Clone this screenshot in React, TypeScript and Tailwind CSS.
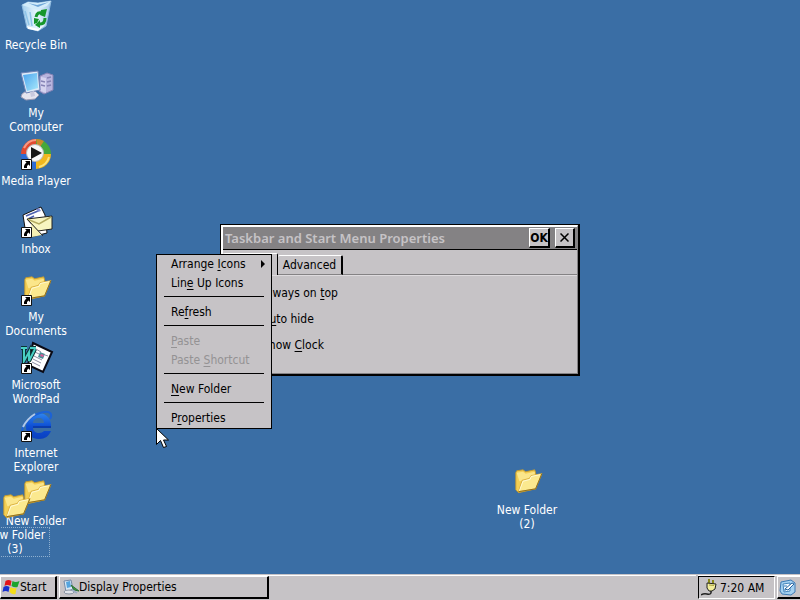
import type { ReactNode } from "react";

function Shortcut() {
  return (
    <g>
      <path d="M1.500 21.500h10v10h-10z" fill="#fff" stroke="#111" />
      <path d="M5 23h5v5l-1.500-1.500L7 28v2H4v-2l1-2 1.500-1.500z" fill="#000" />
    </g>
  );
}

function FolderShape() {
  return (
    <g transform="translate(3 0) scale(.9 .95)">
      <path d="M2 6l1-2 7-1 3 2 10-2 1 3v17l-19 4-3-3z" fill="#f3cf55" stroke="#c49a2c" strokeWidth="1" />
      <path d="M3 6l7-1 3 2 10-2v8L6 15z" fill="#fbe68a" />
      <path d="M5 26l4-12 8-2 2-3 12-2-7 16z" fill="#fbe98f" stroke="#d9ae3c" strokeWidth="1" />
      <path d="M6 25l4-10 8-2 1-3 10-2" fill="none" stroke="#fffbd8" strokeWidth="1" />
      <path d="M5 26l19-3 7-16" fill="none" stroke="#8a6a1c" strokeWidth="1" />
    </g>
  );
}

function Pic({ children }: { children: ReactNode }) {
  return (
    <svg width="32" height="32" viewBox="0 0 32 32" className="shrink-0 overflow-visible" aria-hidden="true">
      {children}
    </svg>
  );
}

function FolderIcon() {
  return (
    <Pic>
      <FolderShape />
    </Pic>
  );
}

function DocumentsIcon() {
  return (
    <Pic>
      <FolderShape />
      <Shortcut />
    </Pic>
  );
}

function RecycleIcon() {
  return (
    <Pic>
      <defs>
        <linearGradient id="bin" x1="0" x2="1">
          <stop offset="0" stopColor="#a5d0ee" />
          <stop offset=".5" stopColor="#e6f5fd" />
          <stop offset="1" stopColor="#a3c8ea" />
        </linearGradient>
      </defs>
      <path d="M2 3L8 0l10 1 13-2-5 25-8 5-11-3z" fill="url(#bin)" stroke="#8fbbe0" strokeWidth="1" />
      <path d="M2 3l6-3 10 1 13-2-4 5-10 4z" fill="#d3ecfa" />
      <path d="M8 1l9 2 12-3-11 5z" fill="#6fa6d8" />
      <path d="M7 24l11 3 7-5-7 7-10-2z" fill="#fff" />
      <path d="M5 9l4 14M10 10l2 14" stroke="#8fc4e8" strokeWidth="1.500" />
      <path d="M16 15c1-4 3-5 6-4" fill="none" stroke="#16962b" strokeWidth="3" />
      <path d="M21 8l6-1-2 8-5-2z" fill="#16962b" />
      <path d="M25 16c0 4-2 6-5 6" fill="none" stroke="#16962b" strokeWidth="3" />
      <path d="M20 18v8l-5-3z" fill="#16962b" />
      <path d="M14 16l5 1-2 4-3 1z" fill="#16962b" />
    </Pic>
  );
}

function ComputerIcon() {
  return (
    <Pic>
      <defs>
        <linearGradient id="screen" x1="0" y1="0" x2="1" y2="1">
          <stop offset="0" stopColor="#4aa4ee" />
          <stop offset="1" stopColor="#a7e8fb" />
        </linearGradient>
      </defs>
      <path d="M20 6l7-3 6 2v15l-9 4-5-3z" fill="#b7b4dd" stroke="#8583b5" strokeWidth="1" />
      <path d="M21 7l5 1v15l-5-2z" fill="#d5d3ef" />
      <path d="M27 8l4-1M27 12l4-1M27 16l4-1M21 11l4 1M21 15l4 1" stroke="#8583b5" strokeWidth="1.500" />
      <path d="M6 21h9l4 4-4 4-9 1-5-3 1-3z" fill="#e5e4ee" stroke="#9b9bb5" strokeWidth="1" />
      <path d="M1 3l17-2 2 19-14 3z" fill="#dceaf8" stroke="#6e83b6" strokeWidth="1" />
      <path d="M3 5l14-2 1 15-11 3z" fill="url(#screen)" />
      <path d="M10 22l4-1 1 5-4 1z" fill="#c9c9dd" />
    </Pic>
  );
}

function MediaIcon() {
  return (
    <Pic>
      <path d="M16 16V1a15 15 0 0 0-15 15z" fill="#e2492f" />
      <path d="M16 16V1a15 15 0 0 1 15 15z" fill="#48a83b" />
      <path d="M16 16h15a15 15 0 0 1-15 15z" fill="#f1b71d" />
      <path d="M16 16v15A15 15 0 0 1 1 16z" fill="#2f6bd3" />
      <path d="M16 1a15 15 0 0 1 8 2l-6 9z" fill="#c98a2c" />
      <path d="M4 10a14 14 0 0 1 12-8" fill="none" stroke="#f59a84" strokeWidth="2" />
      <path d="M29 19a14 14 0 0 1-10 10" fill="none" stroke="#fbe27a" strokeWidth="2" />
      <circle cx="15" cy="15" r="8.500" fill="#f8f8f8" stroke="#b9b9b9" />
      <path d="M11 9l11 6-11 6z" fill="#161616" />
      <Shortcut />
    </Pic>
  );
}

function InboxIcon() {
  return (
    <Pic>
      <path d="M3 9L21 1l4 8 2 18-16 4-6-9z" fill="#fff" stroke="#111" />
      <path d="M6 10l12-5M8 13l6-3" stroke="#4a5fae" strokeWidth="1.500" />
      <path d="M16 3l3-1 2 3-3 1z" fill="#7d8bd0" />
      <path d="M7 13l25-3v13l-14 2z" fill="#f8f5c0" stroke="#222" />
      <path d="M7 13l12 5 12-7" fill="none" stroke="#b3aa60" strokeWidth="1.500" />
      <path d="M11 17l11 12-10 2z" fill="#f5f1b4" />
      <path d="M7 13l16 17" stroke="#333" />
      <Shortcut />
    </Pic>
  );
}

function WordPadIcon() {
  return (
    <Pic>
      <path d="M13 1l19 9-9 20-15-7z" fill="#fff" stroke="#0a0a14" strokeWidth="2" />
      <path d="M16 7l5 3M15 10l4 2M14 14l8 4M13 17l8 4M12 20l8 4M25 13l3 1" stroke="#8d8da5" strokeWidth="1" />
      <path d="M20 10l5 2-2 5-5-2z" fill="#4a8b94" />
      <path d="M21 12l3 1-1 2-3-1z" fill="#d85c97" />
      <path d="M1 6h6M10 6h6M4 7v12l5-9v9l6-12" fill="none" stroke="#0b3433" strokeWidth="4" />
      <path d="M1 6h6M10 6h6M4 7v12l5-9v9l6-12" fill="none" stroke="#48cfc4" strokeWidth="2" />
      <Shortcut />
    </Pic>
  );
}

function ExplorerIcon() {
  return (
    <Pic>
      <defs>
        <linearGradient id="globe" x1="0" y1="0" x2="0" y2="1">
          <stop offset="0" stopColor="#2f86ee" />
          <stop offset=".5" stopColor="#0f50d4" />
          <stop offset="1" stopColor="#0a3fc0" />
        </linearGradient>
      </defs>
      <path
        d="M31 18H13c0 3 3 5 6 5 2 0 4-1 5-2h7c-2 5-6 8-12 8C11 29 6 24 6 17S11 3 19 3s13 7 12 15zM13 13h11c0-3-2-5-5-5s-6 2-6 5z"
        fill="url(#globe)"
        fillRule="evenodd"
      />
      <path d="M2 21C3 12 13 4 24 2c6-1 9 2 6 7" fill="none" stroke="#1c62d6" strokeWidth="2" />
      <path d="M3 17C6 11 10 7 15 4" fill="none" stroke="#b4c9e4" strokeWidth="2" />
      <path d="M13 17h18" stroke="#062a86" strokeWidth="1" />
      <Shortcut />
    </Pic>
  );
}

function DesktopItem({ icon, label, focused = false }: { icon: ReactNode; label: string; focused?: boolean }) {
  return (
    <button type="button" className="flex h-[68px] w-[72px] flex-col items-center gap-[3px] pt-[2px] text-white">
      {icon}
      <span
        className={
          focused
            ? "w-[70px] border border-dotted border-[#8fb0cf] text-center leading-[14px]"
            : "w-[72px] border border-transparent text-center leading-[14px]"
        }
      >
        {label}
      </span>
    </button>
  );
}

const shortcuts = [
  { label: "Recycle Bin", icon: <RecycleIcon /> },
  { label: "My Computer", icon: <ComputerIcon /> },
  { label: "Media Player", icon: <MediaIcon /> },
  { label: "Inbox", icon: <InboxIcon /> },
  { label: "My Documents", icon: <DocumentsIcon /> },
  { label: "Microsoft WordPad", icon: <WordPadIcon /> },
  { label: "Internet Explorer", icon: <ExplorerIcon /> },
  { label: "New Folder", icon: <FolderIcon /> },
];

function Key({ children }: { children: ReactNode }) {
  return <span className="underline underline-offset-2">{children}</span>;
}

function Option({ id, children }: { id: string; children: ReactNode }) {
  return (
    <div className="flex items-center gap-3">
      <input
        id={id}
        type="checkbox"
        className="size-[15px] appearance-none border border-black bg-white checked:bg-[#848284]"
      />
      <label htmlFor={id} className="leading-[14px]">
        {children}
      </label>
    </div>
  );
}

function PropertiesWindow() {
  return (
    <section
      aria-label="Taskbar and Start Menu Properties"
      className="absolute left-[220px] top-[224px] w-[360px] border-b-2 border-l border-r-2 border-t border-black bg-[#c6c3c6]"
    >
      <div className="border-b border-l-2 border-r border-t-2 border-white border-b-[#848284] border-r-[#848284]">
        <header className="flex h-[23px] items-center gap-[5px] border-b border-black bg-[#848284] pl-[2px] pr-[2px]">
          <h1 className="flex-1 whitespace-nowrap font-['Noto_Sans','DejaVu_Sans',sans-serif] text-[13px] font-semibold text-[#c6c3c6]">
            Taskbar and Start Menu Properties
          </h1>
          <button
            type="button"
            className="flex h-[20px] w-[21px] items-center justify-center border-b-2 border-l border-r-2 border-t border-black border-l-white border-t-white bg-[#c6c3c6] font-bold"
          >
            OK
          </button>
          <button
            type="button"
            aria-label="Close"
            className="flex h-[20px] w-[20px] items-center justify-center border-b-2 border-l border-r-2 border-t border-black border-l-white border-t-white bg-[#c6c3c6]"
          >
            <svg width="9" height="9" viewBox="0 0 9 9" aria-hidden="true">
              <path d="M0.500.5l8 8M8.500.5l-8 8" stroke="#000" strokeWidth="1.500" />
            </svg>
          </button>
        </header>
        <div className="flex items-end pt-[3px]" role="tablist">
          <button
            type="button"
            role="tab"
            aria-selected="true"
            className="h-[22px] w-[55px] rounded-t-[2px] border-l border-r border-t border-black border-l-white border-t-white"
          >
            General
          </button>
          <button
            type="button"
            role="tab"
            aria-selected="false"
            className="h-[20px] w-[65px] rounded-t-[2px] border-b border-r-2 border-t border-black border-b-[#848284] border-t-white"
          >
            Advanced
          </button>
          <span className="flex-1 border-b border-[#848284]" />
        </div>
        <div className="flex h-[98px] flex-col gap-[11px] border-t border-[#dedbde] pl-[12px] pt-[9px]">
          <Option id="on-top">
            Always on <Key>t</Key>op
          </Option>
          <Option id="auto-hide">
            A<Key>u</Key>to hide
          </Option>
          <Option id="show-clock">
            Show <Key>C</Key>lock
          </Option>
        </div>
      </div>
    </section>
  );
}

function Item({ children, disabled = false }: { children: ReactNode; disabled?: boolean }) {
  return (
    <button
      type="button"
      role="menuitem"
      disabled={disabled}
      className="flex h-[19px] w-full items-center justify-between whitespace-nowrap pb-[2px] pl-[14px] pr-[6px] disabled:text-[#949294]"
    >
      {children}
    </button>
  );
}

function Separator() {
  return (
    <div role="separator" className="flex h-[10px] items-start px-[7px] pt-[3px]">
      <span className="h-px flex-1 bg-black" />
    </div>
  );
}

function ContextMenu() {
  return (
    <div
      role="menu"
      aria-label="Desktop"
      className="absolute left-[156px] top-[254px] w-[116px] border border-black bg-[#c6c3c6]"
    >
      <Item>
        <span>
          Arrange <Key>I</Key>cons
        </span>
        <svg width="4" height="8" viewBox="0 0 4 8" aria-hidden="true">
          <path d="M0 0l4 4-4 4z" />
        </svg>
      </Item>
      <Item>
        <span>
          Lin<Key>e</Key> Up Icons
        </span>
      </Item>
      <Separator />
      <Item>
        <span>
          Re<Key>f</Key>resh
        </span>
      </Item>
      <Separator />
      <Item disabled>
        <span>
          <Key>P</Key>aste
        </span>
      </Item>
      <Item disabled>
        <span>
          Paste <Key>S</Key>hortcut
        </span>
      </Item>
      <Separator />
      <Item>
        <span>
          <Key>N</Key>ew Folder
        </span>
      </Item>
      <Separator />
      <Item>
        <span>
          P<Key>r</Key>operties
        </span>
      </Item>
    </div>
  );
}

function Taskbar() {
  return (
    <footer className="flex h-[26px] shrink-0 items-stretch gap-[2px] border-t border-[#c6c3c6] bg-[#c6c3c6]">
      <div className="flex flex-1 items-stretch gap-[2px] border-t border-white pb-px">
        <button
          type="button"
          className="flex w-[57px] items-center border-b-2 border-l border-r-2 border-t border-black border-l-white border-t-white pl-px"
        >
          <svg width="18" height="16" viewBox="0 0 17 16" aria-hidden="true">
            <path d="M3 2q3-2 6 0L8 7Q5 5 2 7z" fill="#e3131b" />
            <path d="M10 2q3 2 7 0l-2 6q-3 1-6-1z" fill="#1ca42c" />
            <path d="M1 8q3-2 6 0l-1 5Q3 11 0 13z" fill="#1730cf" />
            <path d="M8 8q3 2 6 1l-1 6q-3 1-6-2z" fill="#f4dd18" />
          </svg>
          Start
        </button>
        <button
          type="button"
          className="flex w-[210px] items-center border-b-2 border-l border-r-2 border-t border-black border-l-white border-t-white pl-[3px]"
        >
          <svg width="16" height="16" viewBox="0 0 16 16" aria-hidden="true">
            <path d="M1 2l7-1 2 9-7 3z" fill="#d8e8f4" stroke="#7389a6" />
            <path d="M3 3l4-1 1 6-4 1z" fill="#54a4de" />
            <ellipse cx="6" cy="13" rx="5" ry="2" fill="#e1e4ea" stroke="#8791a0" />
            <path d="M8 6l8 6-5-1z" fill="#3f9b40" stroke="#2c7036" />
            <path d="M9 11l5 3" stroke="#9badc4" strokeWidth="2" />
          </svg>
          Display Properties
        </button>
      </div>
      <div className="flex items-stretch gap-[2px] border-t border-white pb-px">
        <div className="flex w-[77px] items-center gap-[3px] border border-b-white border-l-black border-r-white border-t-black pl-[2px]">
          <svg width="16" height="18" viewBox="0 0 16 18" aria-hidden="true">
            <path d="M8 0v4M12 1v4" stroke="#8a8a18" strokeWidth="2" />
            <path d="M6 4l9 1-1 5-3 2H8L6 9z" fill="#f1ed9c" stroke="#222" />
            <path d="M10 12v2q-1 2-4 1t-6 1" fill="none" stroke="#222" strokeWidth="1.500" />
            <path d="M8 6l5 .5" stroke="#aaa23e" />
          </svg>
          <time className="whitespace-nowrap">7:20 AM</time>
        </div>
        <button
          type="button"
          aria-label="Show Desktop"
          className="flex w-[23px] items-center border-b-2 border-l border-t border-b-black border-l-white border-t-white pl-px"
        >
          <svg width="17" height="17" viewBox="0 0 17 17" aria-hidden="true">
            <path d="M2 3l10-2 4 3v9l-4 3-9-1-2-3z" fill="#a3d0f0" stroke="#3c7ab4" />
            <path d="M4 5l7-1v8l-6 1z" fill="#eff8ff" stroke="#4486bc" />
            <path d="M6 10l7-6 2 1-6 6z" fill="#fff" stroke="#28659f" />
            <path d="M5 7h3M6 10v2" stroke="#397bb4" />
          </svg>
        </button>
      </div>
    </footer>
  );
}

export default function App() {
  return (
    <div className="flex h-screen flex-col overflow-hidden bg-[#3a6ea5] font-['DejaVu_Sans_Condensed','DejaVu_Sans',sans-serif] text-[12px] leading-[14px] text-black">
      <main className="relative min-h-0 flex-1 overflow-hidden">
        <nav aria-label="Desktop shortcuts" className="flex flex-col items-start">
          {shortcuts.map((item) => (
            <DesktopItem key={item.label} icon={item.icon} label={item.label} />
          ))}
        </nav>
        <div className="absolute left-[-21px] top-[490px]">
          <DesktopItem icon={<FolderIcon />} label="New Folder (3)" focused />
        </div>
        <div className="absolute left-[491px] top-[465px]">
          <DesktopItem icon={<FolderIcon />} label="New Folder (2)" />
        </div>
        <PropertiesWindow />
        <ContextMenu />
        <svg className="absolute left-[156px] top-[428px]" width="13" height="21" viewBox="0 0 13 21" aria-hidden="true">
          <path d="M.5.5v16l4-4 3 7 3-1-3-6.500h5z" fill="#fff" stroke="#000" />
        </svg>
      </main>
      <Taskbar />
    </div>
  );
}
